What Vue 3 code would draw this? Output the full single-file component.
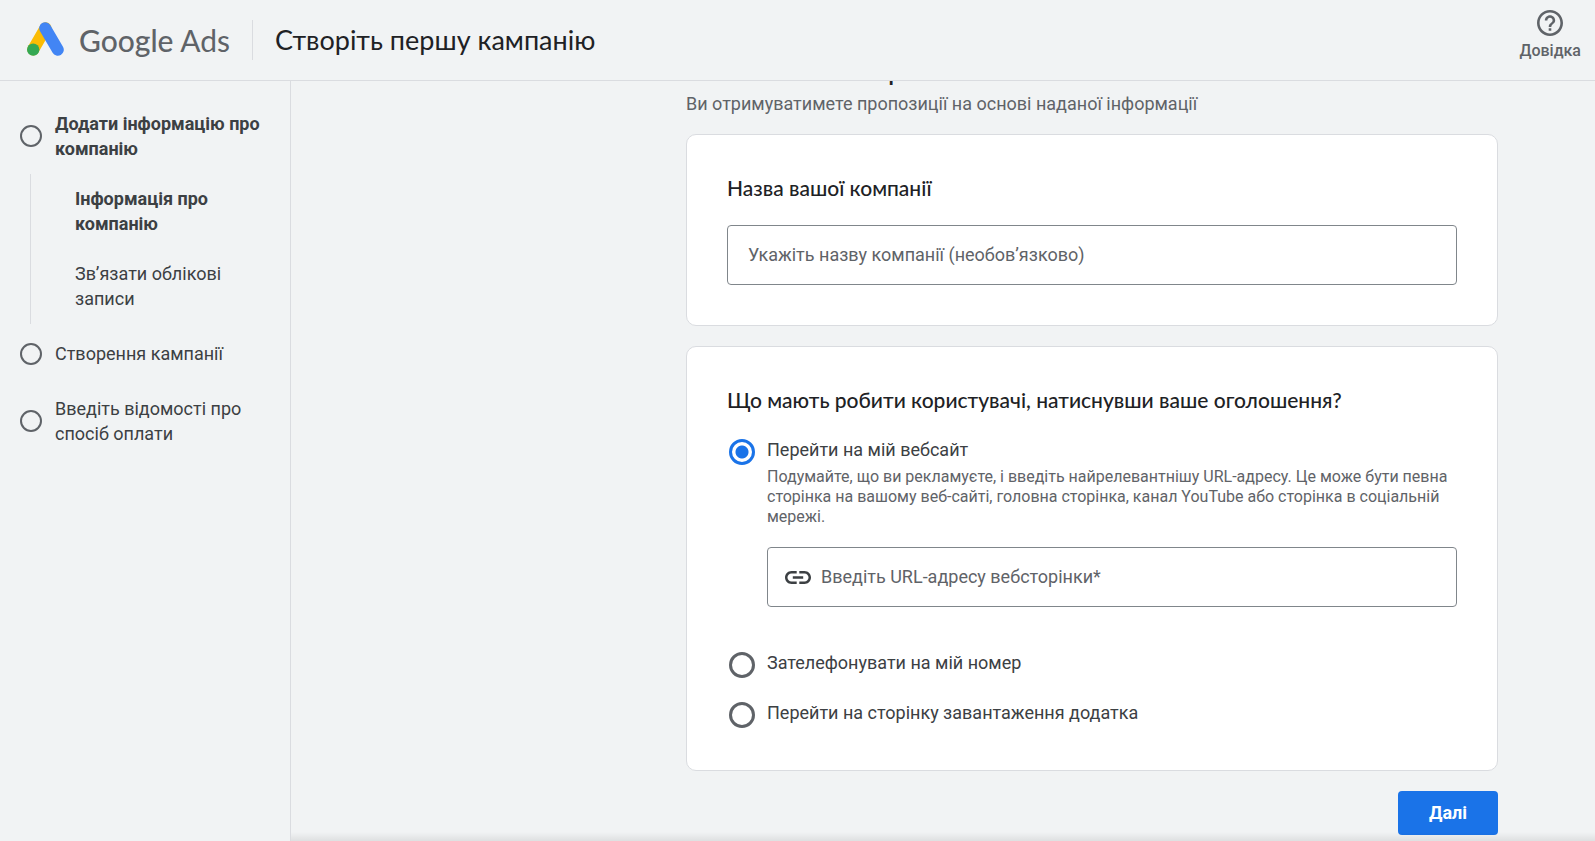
<script setup>
import { onMounted, ref } from 'vue'

const companyName = ref('')
const siteUrl = ref('')
const goal = ref('site')
const scroller = ref(null)

onMounted(() => {
  scroller.value.scrollTop = 40
})
</script>

<template>
  <div class="shell">
    <header class="topbar">
      <svg class="logo" viewBox="0 0 37 34" aria-hidden="true">
        <path d="M18.5 6.2 6.2 27.5" stroke="#fbbc04" stroke-width="12" stroke-linecap="round" />
        <path d="M18.2 6.2 30.8 27.8" stroke="#4285f4" stroke-width="12" stroke-linecap="round" />
        <circle cx="6.2" cy="27.6" r="6.2" fill="#34a853" />
      </svg>
      <span class="brand"><span class="brand-main">Google</span> Ads</span>
      <h1 class="title">Створіть першу кампанію</h1>
      <button class="help" type="button">
        <svg class="help-icon" viewBox="2 2 20 20" aria-hidden="true">
          <path
            d="M11 18h2v-2h-2v2zm1-16C6.48 2 2 6.48 2 12s4.48 10 10 10 10-4.48 10-10S17.52 2 12 2zm0 18c-4.41 0-8-3.59-8-8s3.59-8 8-8 8 3.59 8 8-3.59 8-8 8zm0-14c-2.21 0-4 1.79-4 4h2c0-1.1.9-2 2-2s2 .9 2 2c0 2-3 1.75-3 5h2c0-2.25 3-2.5 3-5 0-2.21-1.79-4-4-4z"
          />
        </svg>
        <span>Довідка</span>
      </button>
    </header>

    <div class="body">
      <nav class="steps">
        <div class="step current"><i class="dot"></i><span>Додати інформацію про компанію</span></div>
        <div class="substeps">
          <span class="current">Інформація про компанію</span>
          <span>Зв’язати облікові записи</span>
        </div>
        <div class="step"><i class="dot"></i><span>Створення кампанії</span></div>
        <div class="step"><i class="dot"></i><span>Введіть відомості про спосіб оплати</span></div>
      </nav>

      <main class="content">
        <div ref="scroller" class="scroller">
          <form class="column" @submit.prevent>
            <h2 class="page-title">Розкажіть нам про компанію</h2>
            <p class="subtitle">Ви отримуватимете пропозиції на основі наданої інформації</p>

            <section class="card">
              <h3 id="name-heading" class="card-title">Назва вашої компанії</h3>
              <div class="field">
                <input
                  v-model="companyName"
                  type="text"
                  aria-labelledby="name-heading"
                  placeholder="Укажіть назву компанії (необов’язково)"
                />
              </div>
            </section>

            <section class="card goals" role="radiogroup" aria-labelledby="goal-heading">
              <h3 id="goal-heading" class="card-title">Що мають робити користувачі, натиснувши ваше оголошення?</h3>
              <div class="option with-details">
                <input id="goal-site" v-model="goal" type="radio" name="goal" value="site" />
                <label for="goal-site">Перейти на мій вебсайт</label>
              </div>
              <div class="details">
                <p class="hint">
                  Подумайте, що ви рекламуєте, і введіть найрелевантнішу URL-адресу. Це може бути певна сторінка на
                  вашому веб-сайті, головна сторінка, канал YouTube або сторінка в соціальній мережі.
                </p>
                <label class="field with-icon">
                  <svg class="link-icon" viewBox="2 7 20 10" aria-hidden="true">
                    <path
                      d="M3.9 12c0-1.71 1.39-3.1 3.1-3.1h4V7H7c-2.76 0-5 2.24-5 5s2.24 5 5 5h4v-1.9H7c-1.71 0-3.1-1.39-3.1-3.1zM8 13h8v-2H8v2zm9-6h-4v1.9h4c1.71 0 3.1 1.39 3.1 3.1s-1.39 3.1-3.1 3.1h-4V17h4c2.76 0 5-2.24 5-5s-2.24-5-5-5z"
                    />
                  </svg>
                  <input
                    v-model="siteUrl"
                    type="url"
                    aria-label="Введіть URL-адресу вебсторінки"
                    placeholder="Введіть URL-адресу вебсторінки*"
                  />
                </label>
              </div>
              <div class="option">
                <input id="goal-call" v-model="goal" type="radio" name="goal" value="call" />
                <label for="goal-call">Зателефонувати на мій номер</label>
              </div>
              <div class="option">
                <input id="goal-app" v-model="goal" type="radio" name="goal" value="app" />
                <label for="goal-app">Перейти на сторінку завантаження додатка</label>
              </div>
            </section>

            <button class="next" type="submit">Далі</button>
          </form>
        </div>
      </main>
    </div>
  </div>
</template>

<style>
body {
  margin: 0;
  background: #f1f3f4;
}
</style>

<style scoped>
.shell {
  display: flex;
  flex-direction: column;
  height: 100vh;
  background: #f1f3f4;
  color: #3c4043;
  font-family: Roboto, "Noto Sans", sans-serif;
  font-size: 18px;
  line-height: 25px;
}

h1,
h2,
h3,
p {
  margin: 0;
}

.topbar {
  display: flex;
  align-items: center;
  flex: none;
  box-sizing: border-box;
  height: 81px;
  padding: 0 14px 0 27px;
  border-bottom: 1px solid #dadce0;
}

.logo {
  width: 37px;
  height: 34px;
  margin-right: 15px;
  margin-bottom: 2px;
  fill: none;
}

.brand {
  padding-right: 22px;
  border-right: 1px solid #dadce0;
  color: #5f6368;
  font-family: Lato, sans-serif;
  font-size: 30px;
  line-height: 40px;
}

.brand-main {
  font-weight: 500;
}

.title {
  padding-left: 22px;
  color: #202124;
  font-family: Lato, sans-serif;
  font-size: 27px;
  font-weight: 400;
  line-height: 40px;
}

.help {
  display: flex;
  flex-direction: column;
  align-items: center;
  align-self: flex-start;
  gap: 5px;
  margin-left: auto;
  padding: 10px 0 0;
  border: 0;
  background: none;
  color: #5f6368;
  font: 500 16px/20px Roboto, sans-serif;
}

.help-icon {
  width: 26px;
  height: 26px;
  fill: currentColor;
}

.body {
  display: flex;
  flex: 1;
  min-height: 0;
}

.steps {
  box-sizing: border-box;
  flex: none;
  width: 291px;
  padding: 30px 20px 0;
  border-right: 1px solid #dadce0;
}

.step {
  display: flex;
  align-items: center;
  gap: 13px;
  margin-bottom: 30px;
}

.step:first-child {
  margin-bottom: 13px;
}

.current {
  font-weight: 700;
}

.dot {
  box-sizing: border-box;
  flex: none;
  width: 22px;
  height: 22px;
  border: 2px solid #5f6368;
  border-radius: 50%;
}

.substeps {
  display: flex;
  flex-direction: column;
  gap: 25px;
  margin: 0 0 17px 10px;
  padding: 12px 20px 13px 44px;
  border-left: 1px solid #dadce0;
}

.content {
  position: relative;
  flex: 1;
  min-width: 0;
}

.content::after {
  content: "";
  position: absolute;
  right: 0;
  bottom: 0;
  left: 0;
  height: 9px;
  background: linear-gradient(rgba(0, 0, 0, 0), rgba(0, 0, 0, 0.08));
  pointer-events: none;
}

.scroller {
  height: 100%;
  overflow-y: auto;
  scrollbar-width: none;
}

.column {
  display: flex;
  flex-direction: column;
  max-width: 812px;
  margin: 0 97px 0 auto;
  padding: 10px 0 60px;
}

.page-title {
  color: #202124;
  font-family: Lato, sans-serif;
  font-size: 27px;
  font-weight: 500;
  line-height: 38px;
  margin-bottom: 2px;
}

.subtitle {
  margin-bottom: 18px;
  color: #5f6368;
}

.card {
  margin-bottom: 20px;
  padding: 40px;
  border: 1px solid #dadce0;
  border-radius: 10px;
  background: #fff;
}

.card-title {
  margin-bottom: 24px;
  color: #202124;
  font-family: Lato, sans-serif;
  font-size: 21px;
  font-weight: 500;
  line-height: 26px;
}

.field {
  display: flex;
  align-items: center;
  box-sizing: border-box;
  height: 60px;
  padding: 0 20px;
  border: 1px solid #80868b;
  border-radius: 4px;
}

.with-icon {
  gap: 10px;
  padding: 0 17px;
}

.field input {
  flex: 1;
  min-width: 0;
  padding: 0 0 2px;
  border: 0;
  outline: 0;
  background: none;
  color: #3c4043;
  font: inherit;
}

.field input::placeholder {
  color: #5f6368;
  opacity: 1;
}

.link-icon {
  width: 26px;
  height: 13px;
  fill: #3c4043;
}

.option {
  display: flex;
  align-items: flex-start;
  gap: 12px;
  height: 26px;
  margin: 0 0 24px 2px;
  line-height: 22px;
}

.option input {
  appearance: none;
  box-sizing: border-box;
  flex: none;
  width: 26px;
  height: 26px;
  margin: 0;
  border: 3px solid #5f6368;
  border-radius: 50%;
}

.option input:checked {
  border-color: #1a73e8;
  background: radial-gradient(circle, #1a73e8 6px, transparent 7px);
}

.goals .card-title {
  margin-bottom: 26px;
}

.goals .with-details {
  margin-bottom: 2px;
}

.details {
  margin: 0 0 45px 40px;
}

.goals .option:last-child {
  margin-bottom: 2px;
}

.hint {
  margin-bottom: 20px;
  color: #5f6368;
  font-size: 16px;
  line-height: 20px;
}

.next {
  align-self: flex-end;
  min-width: 100px;
  height: 44px;
  border: 0;
  border-radius: 4px;
  background: #1a73e8;
  color: #fff;
  font: 700 18px/24px Roboto, sans-serif;
}
</style>
